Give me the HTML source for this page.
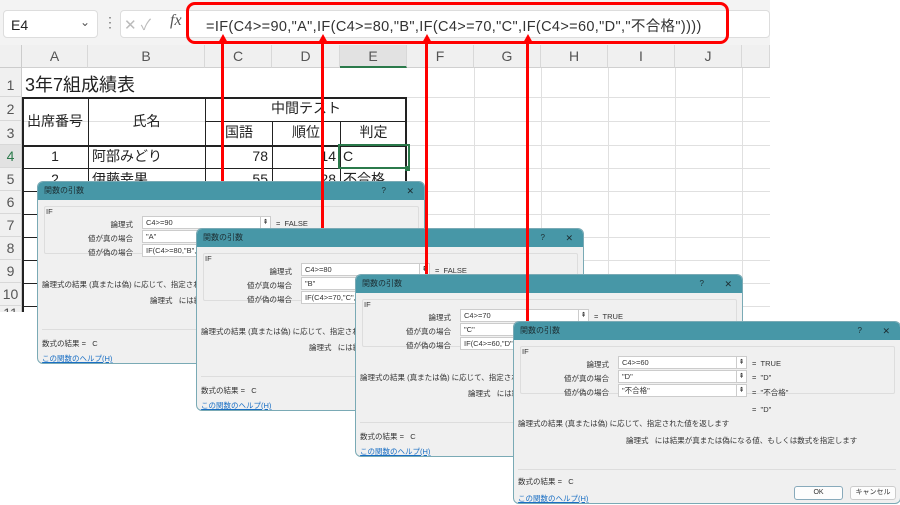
<!DOCTYPE html>
<html><head><meta charset="utf-8"><style>
*{margin:0;padding:0;box-sizing:border-box}
body{width:900px;height:505px;overflow:hidden;background:#fff;position:relative;font-family:"Liberation Sans","Noto Sans CJK JP",sans-serif;color:#222}
.a{position:absolute}
.sheet{left:0;top:0;width:770px;height:312px;background:#fff;overflow:hidden}
.top{left:0;top:0;width:770px;height:45px;background:#f3f3f3}
.nb{left:3px;top:10px;width:95px;height:28px;background:#fff;border-radius:4px;border:1px solid #ddd;font-size:14px;padding:6px 7px}
.fb{left:120px;top:10px;width:650px;height:28px;background:#fff;border-radius:4px;border:1px solid #ddd}
.ch{top:45px;height:23px;background:#f0f0f0;border-right:1px solid #d8d8d8;border-bottom:1px solid #d0d0d0;font-size:14px;color:#555;text-align:center;line-height:23px}
.rh{left:0;width:22px;background:#f0f0f0;border-bottom:1px solid #d8d8d8;border-right:1px solid #ccc;font-size:14px;color:#555;text-align:center}
.hl{left:22px;height:1px;background:#e0e0e0;width:748px}
.vl{top:68px;width:1px;background:#e0e0e0;height:250px}
.c{font-size:14px;line-height:23px}
.dlg{width:388px;height:183px;background:#f0f0f0;border:1px solid #7aaab5;border-radius:6px;overflow:hidden;font-size:7.5px;color:#333}
.tb{left:0;top:0;width:100%;height:18px;background:#4797a7;color:#1c2c30;font-size:8px;line-height:18px;padding-left:6px}
.tb .q{position:absolute;right:38px;top:0}.tb .x{position:absolute;right:10px;top:0;font-size:9px}
.gb{left:6px;top:24px;width:375px;height:48px;border:1px solid #ddd;border-radius:2px}
.lb{width:95px;text-align:right;font-size:7.5px}
.in{left:104px;width:121px;height:13px;background:#fff;border:1px solid #ccc;font-size:7.5px;line-height:11px;padding-left:3px;white-space:nowrap;overflow:hidden}
.ib{left:222px;width:11px;height:13px;background:#fff;border:1px solid #ccc;font-size:7px;text-align:center;line-height:11px}
.btn{height:14px;background:#fdfdfd;border:1px solid #ccc;border-radius:3px;font-size:7px;text-align:center;line-height:12px}
.ln{width:3px;background:#f00}
.ah{width:0;height:0;border-left:5px solid transparent;border-right:5px solid transparent;border-bottom:9px solid #f00}
</style></head><body>
<div class="a sheet">
<div class="a top"></div>
<div class="a nb">E4<span style="position:absolute;right:7px;top:4px;font-size:12px;color:#555">⌄</span></div>
<div class="a" style="left:103px;top:14px;font-size:14px;color:#777">⋮</div>
<div class="a fb"></div>
<div class="a" style="left:124px;top:14px;font-size:15px;color:#bbb">✕ ✓</div>
<div class="a" style="left:170px;top:12px;font-size:16px;font-style:italic;font-family:'Liberation Serif',serif;color:#555">fx</div>
<div class="a" style="left:206px;top:15px;font-size:14.5px;color:#333;white-space:nowrap;letter-spacing:0.35px">=IF(C4&gt;=90,"A",IF(C4&gt;=80,"B",IF(C4&gt;=70,"C",IF(C4&gt;=60,"D","不合格"))))</div>
<div class="a" style="left:0;top:45px;width:22px;height:23px;background:#f0f0f0;border-right:1px solid #ccc;border-bottom:1px solid #ccc"></div>
<div class="a ch" style="left:22px;width:66px">A</div>
<div class="a ch" style="left:88px;width:117px">B</div>
<div class="a ch" style="left:205px;width:67px">C</div>
<div class="a ch" style="left:272px;width:68px">D</div>
<div class="a ch" style="left:340px;width:67px;background:#e2e2e2;border-bottom:2px solid #2b7a4b">E</div>
<div class="a ch" style="left:407px;width:67px">F</div>
<div class="a ch" style="left:474px;width:67px">G</div>
<div class="a ch" style="left:541px;width:67px">H</div>
<div class="a ch" style="left:608px;width:67px">I</div>
<div class="a ch" style="left:675px;width:67px">J</div>
<div class="a ch" style="left:742px;width:28px"></div>
<div class="a rh" style="top:68px;height:29px;line-height:34px">1</div>
<div class="a rh" style="top:97px;height:24px;line-height:24px">2</div>
<div class="a rh" style="top:121px;height:24px;line-height:24px">3</div>
<div class="a rh" style="top:145px;height:23px;line-height:23px;background:#e2e2e2;color:#2b7a4b">4</div>
<div class="a rh" style="top:168px;height:23px;line-height:23px">5</div>
<div class="a rh" style="top:191px;height:23px;line-height:23px">6</div>
<div class="a rh" style="top:214px;height:23px;line-height:23px">7</div>
<div class="a rh" style="top:237px;height:23px;line-height:23px">8</div>
<div class="a rh" style="top:260px;height:23px;line-height:23px">9</div>
<div class="a rh" style="top:283px;height:23px;line-height:23px">10</div>
<div class="a rh" style="top:306px;height:23px;line-height:14px">11</div>
<div class="a vl" style="left:474px"></div><div class="a vl" style="left:541px"></div><div class="a vl" style="left:608px"></div><div class="a vl" style="left:675px"></div><div class="a vl" style="left:742px"></div>
<div class="a hl" style="top:97px"></div><div class="a hl" style="top:121px"></div><div class="a hl" style="top:145px"></div><div class="a hl" style="top:168px"></div><div class="a hl" style="top:191px"></div><div class="a hl" style="top:214px"></div><div class="a hl" style="top:237px"></div><div class="a hl" style="top:260px"></div><div class="a hl" style="top:283px"></div><div class="a hl" style="top:306px"></div>
<div class="a" style="left:25px;top:71px;font-size:18px">3年7組成績表</div>
<div class="a" style="left:22px;top:97px;width:385px;height:215px;border:2px solid #222;border-bottom:none"></div>
<div class="a" style="left:22px;top:145px;width:385px;height:2px;background:#222"></div>
<div class="a" style="left:22px;top:168px;width:385px;height:1px;background:#222"></div>
<div class="a" style="left:22px;top:191px;width:385px;height:1px;background:#222"></div>
<div class="a" style="left:22px;top:214px;width:385px;height:1px;background:#222"></div>
<div class="a" style="left:22px;top:237px;width:385px;height:1px;background:#222"></div>
<div class="a" style="left:22px;top:260px;width:385px;height:1px;background:#222"></div>
<div class="a" style="left:22px;top:283px;width:385px;height:1px;background:#222"></div>
<div class="a" style="left:22px;top:306px;width:385px;height:1px;background:#222"></div>
<div class="a" style="left:88px;top:97px;width:1px;height:215px;background:#222"></div>
<div class="a" style="left:205px;top:97px;width:1px;height:215px;background:#222"></div>
<div class="a" style="left:205px;top:121px;width:202px;height:1px;background:#222"></div>
<div class="a" style="left:272px;top:121px;width:1px;height:191px;background:#222"></div>
<div class="a" style="left:340px;top:121px;width:1px;height:191px;background:#222"></div>
<div class="a" style="left:338px;top:144px;width:72px;height:25px;border:2px solid #2b7a4b"></div>
<div class="a" style="left:405px;top:166px;width:5px;height:5px;background:#2b7a4b"></div>
<div class="a c" style="left:22px;top:110px;width:66px;text-align:center">出席番号</div>
<div class="a c" style="left:88px;top:110px;width:117px;text-align:center">氏名</div>
<div class="a c" style="left:205px;top:97px;width:202px;text-align:center">中間テスト</div>
<div class="a c" style="left:225px;top:121px">国語</div>
<div class="a c" style="left:272px;top:121px;width:68px;text-align:center">順位</div>
<div class="a c" style="left:340px;top:121px;width:67px;text-align:center">判定</div>
<div class="a c" style="left:22px;top:145px;width:66px;text-align:center">1</div>
<div class="a c" style="left:92px;top:145px">阿部みどり</div>
<div class="a c" style="left:205px;top:145px;width:63px;text-align:right">78</div>
<div class="a c" style="left:272px;top:145px;width:64px;text-align:right">14</div>
<div class="a c" style="left:343px;top:145px">C</div>
<div class="a c" style="left:22px;top:168px;width:66px;text-align:center">2</div>
<div class="a c" style="left:92px;top:168px">伊藤幸果</div>
<div class="a c" style="left:205px;top:168px;width:63px;text-align:right">55</div>
<div class="a c" style="left:272px;top:168px;width:64px;text-align:right">28</div>
<div class="a c" style="left:343px;top:168px">不合格</div>
</div>

<div class="a dlg" style="left:37px;top:181px">
<div class="a tb">関数の引数<span class="q">?</span><span class="x">✕</span></div>
<div class="a" style="left:8px;top:25px">IF</div>
<div class="a gb"></div>
<div class="a lb" style="left:0;top:37px">論理式</div><div class="a in" style="top:34px">C4&gt;=90</div><div class="a ib" style="top:34px">⇞</div><div class="a" style="left:238px;top:37px">=&nbsp;&nbsp;FALSE</div>
<div class="a lb" style="left:0;top:51px">値が真の場合</div><div class="a in" style="top:48px">"A"</div><div class="a ib" style="top:48px">⇞</div>
<div class="a lb" style="left:0;top:65px">値が偽の場合</div><div class="a in" style="top:62px">IF(C4&gt;=80,"B",IF(C4&gt;=70,"C",IF(</div><div class="a ib" style="top:62px">⇞</div>
<div class="a" style="left:4px;top:97px">論理式の結果 (真または偽) に応じて、指定された値を返します</div>
<div class="a" style="left:112px;top:113px">論理式&nbsp;&nbsp;&nbsp;には結果が真または偽になる値</div>
<div class="a" style="left:4px;top:147px;width:378px;height:1px;background:#ddd"></div>
<div class="a" style="left:4px;top:156px">数式の結果 =&nbsp;&nbsp;&nbsp;C</div>
<div class="a" style="left:4px;top:171px;color:#1a6fc4;text-decoration:underline">この関数のヘルプ(H)</div>
</div>
<div class="a dlg" style="left:196px;top:228px">
<div class="a tb">関数の引数<span class="q">?</span><span class="x">✕</span></div>
<div class="a" style="left:8px;top:25px">IF</div>
<div class="a gb"></div>
<div class="a lb" style="left:0;top:37px">論理式</div><div class="a in" style="top:34px">C4&gt;=80</div><div class="a ib" style="top:34px">⇞</div><div class="a" style="left:238px;top:37px">=&nbsp;&nbsp;FALSE</div>
<div class="a lb" style="left:0;top:51px">値が真の場合</div><div class="a in" style="top:48px">"B"</div><div class="a ib" style="top:48px">⇞</div>
<div class="a lb" style="left:0;top:65px">値が偽の場合</div><div class="a in" style="top:62px">IF(C4&gt;=70,"C",IF(C4&gt;=60,"D",</div><div class="a ib" style="top:62px">⇞</div>
<div class="a" style="left:4px;top:97px">論理式の結果 (真または偽) に応じて、指定された値を返します</div>
<div class="a" style="left:112px;top:113px">論理式&nbsp;&nbsp;&nbsp;には結果が真または偽になる値</div>
<div class="a" style="left:4px;top:147px;width:378px;height:1px;background:#ddd"></div>
<div class="a" style="left:4px;top:156px">数式の結果 =&nbsp;&nbsp;&nbsp;C</div>
<div class="a" style="left:4px;top:171px;color:#1a6fc4;text-decoration:underline">この関数のヘルプ(H)</div>
</div>
<div class="a dlg" style="left:355px;top:274px">
<div class="a tb">関数の引数<span class="q">?</span><span class="x">✕</span></div>
<div class="a" style="left:8px;top:25px">IF</div>
<div class="a gb"></div>
<div class="a lb" style="left:0;top:37px">論理式</div><div class="a in" style="top:34px">C4&gt;=70</div><div class="a ib" style="top:34px">⇞</div><div class="a" style="left:238px;top:37px">=&nbsp;&nbsp;TRUE</div>
<div class="a lb" style="left:0;top:51px">値が真の場合</div><div class="a in" style="top:48px">"C"</div><div class="a ib" style="top:48px">⇞</div>
<div class="a lb" style="left:0;top:65px">値が偽の場合</div><div class="a in" style="top:62px">IF(C4&gt;=60,"D","不合格")</div><div class="a ib" style="top:62px">⇞</div>
<div class="a" style="left:4px;top:97px">論理式の結果 (真または偽) に応じて、指定された値を返します</div>
<div class="a" style="left:112px;top:113px">論理式&nbsp;&nbsp;&nbsp;には結果が真または偽になる値</div>
<div class="a" style="left:4px;top:147px;width:378px;height:1px;background:#ddd"></div>
<div class="a" style="left:4px;top:156px">数式の結果 =&nbsp;&nbsp;&nbsp;C</div>
<div class="a" style="left:4px;top:171px;color:#1a6fc4;text-decoration:underline">この関数のヘルプ(H)</div>
</div>
<div class="a dlg" style="left:513px;top:321px">
<div class="a tb">関数の引数<span class="q">?</span><span class="x">✕</span></div>
<div class="a" style="left:8px;top:25px">IF</div>
<div class="a gb"></div>
<div class="a lb" style="left:0;top:37px">論理式</div><div class="a in" style="top:34px">C4&gt;=60</div><div class="a ib" style="top:34px">⇞</div><div class="a" style="left:238px;top:37px">=&nbsp;&nbsp;TRUE</div>
<div class="a lb" style="left:0;top:51px">値が真の場合</div><div class="a in" style="top:48px">"D"</div><div class="a ib" style="top:48px">⇞</div><div class="a" style="left:238px;top:51px">=&nbsp;&nbsp;"D"</div>
<div class="a lb" style="left:0;top:65px">値が偽の場合</div><div class="a in" style="top:62px">"不合格"</div><div class="a ib" style="top:62px">⇞</div><div class="a" style="left:238px;top:65px">=&nbsp;&nbsp;"不合格"</div>
<div class="a" style="left:238px;top:83px">=&nbsp;&nbsp;"D"</div>
<div class="a" style="left:4px;top:96px">論理式の結果 (真または偽) に応じて、指定された値を返します</div>
<div class="a" style="left:112px;top:113px">論理式&nbsp;&nbsp;&nbsp;には結果が真または偽になる値、もしくは数式を指定します</div>
<div class="a" style="left:4px;top:147px;width:378px;height:1px;background:#ddd"></div>
<div class="a" style="left:4px;top:154px">数式の結果 =&nbsp;&nbsp;&nbsp;C</div>
<div class="a" style="left:4px;top:171px;color:#1a6fc4;text-decoration:underline">この関数のヘルプ(H)</div>
<div class="a btn" style="left:280px;top:164px;width:49px;border-color:#8ab">OK</div>
<div class="a btn" style="left:336px;top:164px;width:46px">キャンセル</div>
</div>

<div class="a" style="left:186px;top:2px;width:543px;height:42px;border:3px solid #f00;border-radius:9px"></div>
<div class="a ln" style="left:221px;top:40px;height:141px"></div><div class="a ah" style="left:218px;top:34px"></div>
<div class="a ln" style="left:321px;top:40px;height:188px"></div><div class="a ah" style="left:318px;top:34px"></div>
<div class="a ln" style="left:425px;top:40px;height:234px"></div><div class="a ah" style="left:422px;top:34px"></div>
<div class="a ln" style="left:526px;top:40px;height:281px"></div><div class="a ah" style="left:523px;top:34px"></div>
</body></html>
